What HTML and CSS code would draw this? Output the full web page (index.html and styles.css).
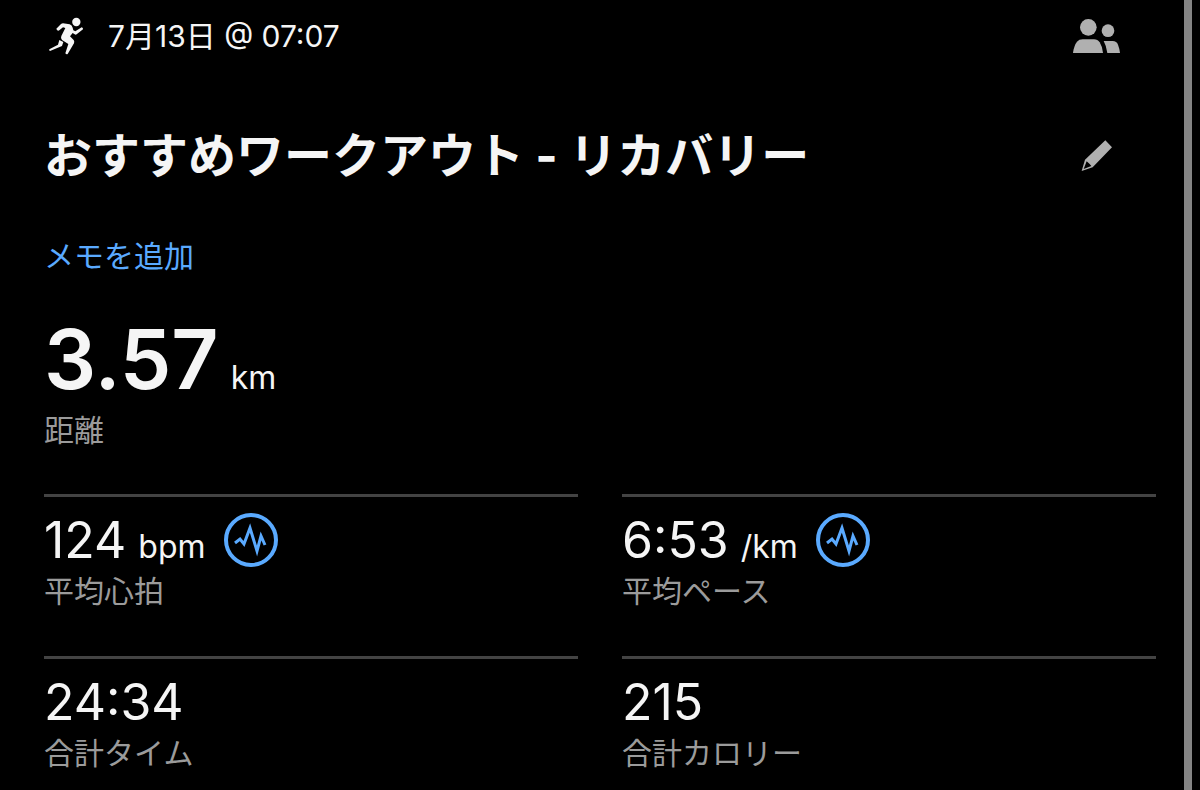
FILE: index.html
```html
<!DOCTYPE html>
<html lang="ja">
<head>
  <meta charset="UTF-8">
  <meta name="viewport" content="width=device-width, initial-scale=1">
  <title>おすすめワークアウト - リカバリー</title>
  <link rel="stylesheet" href="styles.css">
</head>
<body>
  <main class="activity">
    <header class="top-row">
      <svg class="runner" viewBox="54 48 108 117" aria-hidden="true">
        <circle cx="139" cy="63" r="12.5"/>
        <path d="M79 83L93 69Q96 67 99 67L119 70Q126 72 128 80L130 88L136 91L155 79Q160 80 159 85L140 100Q137 102 134 100L128 96L120 106L131 117Q134 121 132 127L113 159Q109 161 106 157L115 129L96 117Q91 112 94 105L106 81L99 79L86 89Q80 89 79 83Z"/>
        <path d="M88 117L100 123L96 135L60 150Q56 148 58 145L84 131Z"/>
      </svg>
      <span class="date">7月13日 @ 07:07</span>
      <button class="icon-button" type="button" aria-label="共有">
        <svg class="people" viewBox="39 39 144 108" aria-hidden="true">
          <circle cx="85" cy="67" r="25"/>
          <circle cx="144" cy="77" r="19"/>
          <path d="M39 144Q42 121 51 110Q57 103 68 103H102Q113 103 119 112Q127 124 129 144Z"/>
          <path d="M131 108H158Q170 108 174 119Q179 132 180 144H142Q139 122 131 108Z"/>
        </svg>
      </button>
    </header>

    <div class="title-row">
      <h1>おすすめワークアウト - リカバリー</h1>
      <button class="icon-button" type="button" aria-label="編集">
        <svg class="pencil" viewBox="63 45 96 96" aria-hidden="true">
          <path fill-rule="evenodd" d="M136 46L156 67L98 127L65 138L75 104ZM80 109L71 132L94 123L89 117Z"/>
        </svg>
      </button>
    </div>

    <a class="add-note" href="#">メモを追加</a>

    <section class="distance">
      <div class="distance-value">
        <span class="big-value">3.57</span>
        <span class="unit">km</span>
      </div>
      <div class="label">距離</div>
    </section>

    <section class="stats">
      <div class="stat">
        <div class="stat-value">
          <span class="value">124</span>
          <span class="unit">bpm</span>
          <button class="chart-button" type="button" aria-label="平均心拍のグラフ">
            <svg class="chart" viewBox="0 0 54 54" aria-hidden="true">
              <circle cx="27" cy="27" r="25"/>
              <path d="M11 30L16 26L20 31L26 15L33 38L37 23L41 32"/>
            </svg>
          </button>
        </div>
        <div class="label">平均心拍</div>
      </div>
      <div class="stat">
        <div class="stat-value">
          <span class="value">6:53</span>
          <span class="unit">/km</span>
          <button class="chart-button" type="button" aria-label="平均ペースのグラフ">
            <svg class="chart" viewBox="0 0 54 54" aria-hidden="true">
              <circle cx="27" cy="27" r="25"/>
              <path d="M11 30L16 26L20 31L26 15L33 38L37 23L41 32"/>
            </svg>
          </button>
        </div>
        <div class="label">平均ペース</div>
      </div>
      <div class="stat">
        <div class="stat-value"><span class="value">24:34</span></div>
        <div class="label">合計タイム</div>
      </div>
      <div class="stat">
        <div class="stat-value"><span class="value">215</span></div>
        <div class="label">合計カロリー</div>
      </div>
    </section>
  </main>
  <div class="scroll-line"></div>
</body>
</html>
```
FILE: styles.css
```css
* {
  box-sizing: border-box;
}
body {
  margin: 0;
  background: #000;
  color: #f5f5f5;
  font-family: Inter, "Noto Sans CJK JP", sans-serif;
}
button {
  padding: 0;
  border: none;
  background: none;
  cursor: pointer;
}
svg {
  display: block;
}
.activity {
  padding: 0 44px;
}
.top-row {
  display: flex;
  align-items: center;
  height: 72px;
}
.runner {
  width: 36px;
  height: 39px;
  margin: 0 24px 0 4px;
  fill: #f5f5f5;
}
.date {
  font-size: 30px;
  line-height: 40px;
}
.icon-button {
  display: flex;
  justify-content: center;
  width: 118px;
  margin-left: auto;
}
.icon-button svg {
  fill: #b0b0b0;
}
.people {
  width: 48px;
  height: 36px;
}
.pencil {
  width: 32px;
  height: 32px;
}
.title-row {
  display: flex;
  align-items: center;
  margin-top: 54px;
}
h1 {
  margin: 0;
  font-size: 48px;
  line-height: 60px;
  font-weight: 700;
}
.add-note {
  display: block;
  width: fit-content;
  margin-top: 50px;
  color: #5aaaff;
  font-size: 30px;
  line-height: 40px;
  text-decoration: none;
}
.distance {
  margin-top: 42px;
}
.distance-value {
  display: flex;
  align-items: baseline;
  gap: 12px;
}
.big-value {
  font-size: 82px;
  line-height: 84px;
  font-weight: 600;
}
.unit {
  font-size: 32px;
}
.label {
  margin-top: 4px;
  color: #9b9b9b;
  font-size: 30px;
  line-height: 40px;
}
.distance .label {
  margin-top: 8px;
}
.stats {
  display: grid;
  grid-template-columns: 1fr 1fr;
  column-gap: 44px;
  margin-top: 44px;
}
.stat {
  min-height: 162px;
  padding-top: 16px;
  border-top: 3px solid #434343;
}
.stat-value {
  display: flex;
  align-items: baseline;
  gap: 12px;
  height: 54px;
  line-height: 54px;
}
.value {
  font-size: 50px;
}
.chart-button {
  align-self: center;
  margin-left: 6px;
}
.chart {
  width: 54px;
  height: 54px;
  fill: none;
  stroke: #5aaaff;
  stroke-width: 4;
}
.chart path {
  stroke-width: 3;
  stroke-miterlimit: 10;
}
.scroll-line {
  position: fixed;
  top: 0;
  right: 8px;
  bottom: 0;
  width: 8px;
  background: #848484;
}
```
